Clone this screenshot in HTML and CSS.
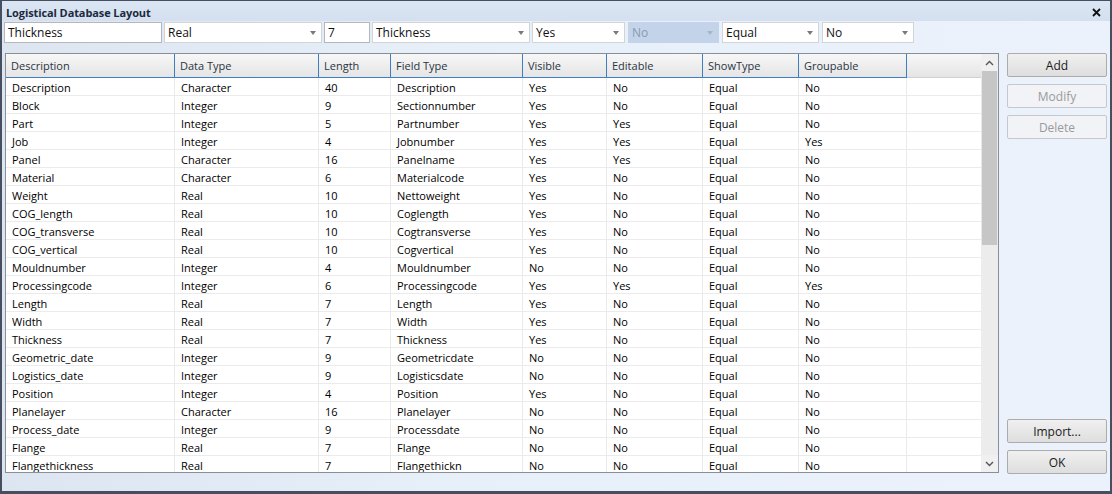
FILE: index.html
```html
<!DOCTYPE html>
<html>
<head>
<meta charset="utf-8">
<link rel="stylesheet" href="styles.css">
</head>
<body>
<div class="window">
  <div class="titlebar">
    <span class="title">Logistical Database Layout</span>
    <svg class="close" width="9" height="9" viewBox="0 0 9 9"><path d="M1 1 L8 8 M8 1 L1 8" stroke="#111" stroke-width="1.8" fill="none"/></svg>
  </div>
  <div class="toolbar">
    <div class="field w1">Thickness</div>
    <div class="combo w2"><span>Real</span><i class="arr"></i></div>
    <div class="field w3">7</div>
    <div class="combo w4"><span>Thickness</span><i class="arr"></i></div>
    <div class="combo w5"><span>Yes</span><i class="arr"></i></div>
    <div class="combo w6 disabled"><span>No</span><i class="arr"></i></div>
    <div class="combo w7"><span>Equal</span><i class="arr"></i></div>
    <div class="combo w8"><span>No</span><i class="arr"></i></div>
  </div>
  <div class="main">
    <div class="grid">
      <div class="table">
        <div class="row head">
          <div>Description</div><div>Data Type</div><div>Length</div><div>Field Type</div><div>Visible</div><div>Editable</div><div>ShowType</div><div>Groupable</div><div class="fill"></div>
        </div>
        <div class="row"><div>Description</div><div>Character</div><div>40</div><div>Description</div><div>Yes</div><div>No</div><div>Equal</div><div>No</div><div class="fill"></div></div>
        <div class="row"><div>Block</div><div>Integer</div><div>9</div><div>Sectionnumber</div><div>Yes</div><div>No</div><div>Equal</div><div>No</div><div class="fill"></div></div>
        <div class="row"><div>Part</div><div>Integer</div><div>5</div><div>Partnumber</div><div>Yes</div><div>Yes</div><div>Equal</div><div>No</div><div class="fill"></div></div>
        <div class="row"><div>Job</div><div>Integer</div><div>4</div><div>Jobnumber</div><div>Yes</div><div>Yes</div><div>Equal</div><div>Yes</div><div class="fill"></div></div>
        <div class="row"><div>Panel</div><div>Character</div><div>16</div><div>Panelname</div><div>Yes</div><div>Yes</div><div>Equal</div><div>No</div><div class="fill"></div></div>
        <div class="row"><div>Material</div><div>Character</div><div>6</div><div>Materialcode</div><div>Yes</div><div>No</div><div>Equal</div><div>No</div><div class="fill"></div></div>
        <div class="row"><div>Weight</div><div>Real</div><div>10</div><div>Nettoweight</div><div>Yes</div><div>No</div><div>Equal</div><div>No</div><div class="fill"></div></div>
        <div class="row"><div>COG_length</div><div>Real</div><div>10</div><div>Coglength</div><div>Yes</div><div>No</div><div>Equal</div><div>No</div><div class="fill"></div></div>
        <div class="row"><div>COG_transverse</div><div>Real</div><div>10</div><div>Cogtransverse</div><div>Yes</div><div>No</div><div>Equal</div><div>No</div><div class="fill"></div></div>
        <div class="row"><div>COG_vertical</div><div>Real</div><div>10</div><div>Cogvertical</div><div>Yes</div><div>No</div><div>Equal</div><div>No</div><div class="fill"></div></div>
        <div class="row"><div>Mouldnumber</div><div>Integer</div><div>4</div><div>Mouldnumber</div><div>No</div><div>No</div><div>Equal</div><div>No</div><div class="fill"></div></div>
        <div class="row"><div>Processingcode</div><div>Integer</div><div>6</div><div>Processingcode</div><div>Yes</div><div>Yes</div><div>Equal</div><div>Yes</div><div class="fill"></div></div>
        <div class="row"><div>Length</div><div>Real</div><div>7</div><div>Length</div><div>Yes</div><div>No</div><div>Equal</div><div>No</div><div class="fill"></div></div>
        <div class="row"><div>Width</div><div>Real</div><div>7</div><div>Width</div><div>Yes</div><div>No</div><div>Equal</div><div>No</div><div class="fill"></div></div>
        <div class="row"><div>Thickness</div><div>Real</div><div>7</div><div>Thickness</div><div>Yes</div><div>No</div><div>Equal</div><div>No</div><div class="fill"></div></div>
        <div class="row"><div>Geometric_date</div><div>Integer</div><div>9</div><div>Geometricdate</div><div>No</div><div>No</div><div>Equal</div><div>No</div><div class="fill"></div></div>
        <div class="row"><div>Logistics_date</div><div>Integer</div><div>9</div><div>Logisticsdate</div><div>No</div><div>No</div><div>Equal</div><div>No</div><div class="fill"></div></div>
        <div class="row"><div>Position</div><div>Integer</div><div>4</div><div>Position</div><div>Yes</div><div>No</div><div>Equal</div><div>No</div><div class="fill"></div></div>
        <div class="row"><div>Planelayer</div><div>Character</div><div>16</div><div>Planelayer</div><div>No</div><div>No</div><div>Equal</div><div>No</div><div class="fill"></div></div>
        <div class="row"><div>Process_date</div><div>Integer</div><div>9</div><div>Processdate</div><div>No</div><div>No</div><div>Equal</div><div>No</div><div class="fill"></div></div>
        <div class="row"><div>Flange</div><div>Real</div><div>7</div><div>Flange</div><div>No</div><div>No</div><div>Equal</div><div>No</div><div class="fill"></div></div>
        <div class="row"><div>Flangethickness</div><div>Real</div><div>7</div><div>Flangethickn</div><div>No</div><div>No</div><div>Equal</div><div>No</div><div class="fill"></div></div>
      </div>
      <div class="scrollbar">
        <div class="sb-btn"><svg width="9" height="6" viewBox="0 0 9 6"><path d="M1 5 L4.5 1.5 L8 5" stroke="#555" stroke-width="1.4" fill="none"/></svg></div>
        <div class="sb-thumb"></div>
        <div class="sb-track"></div>
        <div class="sb-btn"><svg width="9" height="6" viewBox="0 0 9 6"><path d="M1 1 L4.5 4.5 L8 1" stroke="#555" stroke-width="1.4" fill="none"/></svg></div>
      </div>
    </div>
    <div class="buttons">
      <div class="btn">Add</div>
      <div class="btn off">Modify</div>
      <div class="btn off">Delete</div>
      <div class="spacer"></div>
      <div class="btn">Import...</div>
      <div class="btn">OK</div>
    </div>
  </div>
</div>
</body>
</html>
```

FILE: styles.css
```css
* { box-sizing: border-box; }
html, body { margin: 0; padding: 0; }
body {
  width: 1112px;
  height: 494px;
  overflow: hidden;
  font-family: "Open Sans", "Noto Sans", sans-serif;
  font-size: 11px;
  color: #000;
}
.window {
  width: 1112px;
  height: 494px;
  border: 2px solid #464f5f;
  border-top-width: 1px;
  border-bottom-width: 3px;
  background: linear-gradient(to right, #dce5f0, #e7eff9 40%, #ebf2fb);
  display: flex;
  flex-direction: column;
}
.titlebar {
  height: 20px;
  display: flex;
  align-items: center;
  justify-content: space-between;
  padding: 3px 9px 0 4px;
  background: linear-gradient(to bottom, #dbe6f4, #d4e0ef);
}
.title {
  font-weight: bold;
  font-size: 11px;
  color: #1c2a3c;
  letter-spacing: -0.1px;
}
.close { display: block; }
.toolbar {
  height: 21px;
  margin-top: 1px;
  padding-left: 2px;
  display: flex;
}
.field, .combo {
  height: 21px;
  background: #fff;
  border: 1px solid #b4b7bd;
  display: flex;
  align-items: center;
  padding-left: 3px;
  font-size: 12px;
  color: #111;
}
.combo { justify-content: space-between; padding-right: 5px; border-color: #d2d4d8; }
.combo.disabled { background: #c3d4ea; border-color: #c3d4ea; color: #8a9ab0; }
.arr {
  width: 0; height: 0;
  border-left: 3px solid transparent;
  border-right: 3px solid transparent;
  border-top: 4px solid #7a7a7a;
}
.disabled .arr { border-top-color: #a8b4c4; }
.w1 { width: 158px; }
.w2 { width: 158px; margin-left: 2px; }
.w3 { width: 46px; margin-left: 2px; }
.w4 { width: 158px; margin-left: 2px; }
.w5 { width: 93px; margin-left: 2px; }
.w6 { width: 91px; margin-left: 3px; }
.w7 { width: 97px; margin-left: 3px; }
.w8 { width: 92px; margin-left: 3px; }
.main {
  flex: 1;
  display: flex;
  padding: 10px 0 0 3px;
  gap: 8px;
}
.grid {
  width: 994px;
  height: 420px;
  border: 1px solid #8a8e96;
  background: #fff;
  display: flex;
}
.table {
  flex: 1;
  overflow: hidden;
}
.row {
  display: grid;
  grid-template-columns: 169px 144px 72px 132px 84px 96px 96px 108px 1fr;
  height: 18px;
}
.row > div {
  border-right: 1px solid #ebebeb;
  border-bottom: 1px solid #ebebeb;
  padding: 1px 0 0 6px;
  line-height: 17px;
  white-space: nowrap;
  overflow: hidden;
}
.row.head {
  height: 24px;
  background: linear-gradient(to bottom, #f7f7f7, #e4e4e4);
}
.row.head > div {
  border-right: 1px solid #3f7cc0;
  border-bottom: 1px solid #3f7cc0;
  line-height: 24px;
  padding: 0 0 0 5px;
  color: #2a3442;
}
.row.head > div.fill { border-right: none; border-bottom: 1px solid #d0d0d0; }
.row > div.fill { border-right: none; }
.scrollbar {
  width: 17px;
  display: flex;
  flex-direction: column;
  background: #e8e8e8;
}
.sb-btn {
  height: 17px;
  display: flex;
  align-items: center;
  justify-content: center;
  background: #f0f0f0;
}
.sb-thumb {
  height: 174px;
  margin: 0 1px;
  background: #c6c6c6;
}
.sb-track { flex: 1; background: #ececec; }
.buttons {
  width: 100px;
  display: flex;
  flex-direction: column;
  gap: 7px;
  padding-bottom: 17px;
}
.spacer { flex: 1; }
.btn {
  height: 24px;
  border: 1px solid #acacac;
  border-radius: 2px;
  background: linear-gradient(to bottom, #f0f0f0, #dedede);
  display: flex;
  align-items: center;
  justify-content: center;
  font-size: 12px;
  color: #1a1a1a;
}
.btn.off {
  background: #f1f3f6;
  border-color: #c6c8cc;
  color: #9a9a9a;
}
```
